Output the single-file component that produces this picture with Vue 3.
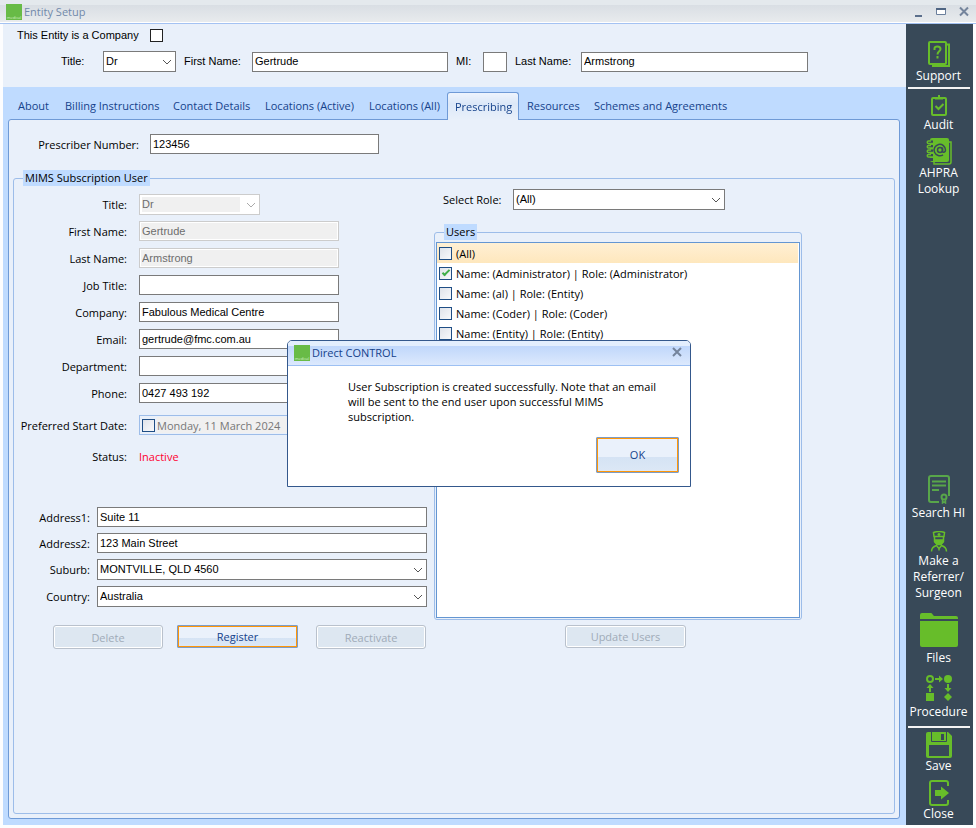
<script setup>
import { ref } from 'vue'

const tabs = ['About', 'Billing Instructions', 'Contact Details', 'Locations (Active)', 'Locations (All)', 'Prescribing', 'Resources', 'Schemes and Agreements']
const activeTab = ref('Prescribing')

const users = ref([
  { label: '(All)', checked: false },
  { label: 'Name: (Administrator) | Role: (Administrator)', checked: true },
  { label: 'Name: (al) | Role: (Entity)', checked: false },
  { label: 'Name: (Coder) | Role: (Coder)', checked: false },
  { label: 'Name: (Entity) | Role: (Entity)', checked: false }
])

const fields = ref([
  { id: 'sub-first', label: 'First Name:', value: 'Gertrude', disabled: true },
  { id: 'sub-last', label: 'Last Name:', value: 'Armstrong', disabled: true },
  { id: 'sub-job', label: 'Job Title:', value: '' },
  { id: 'sub-company', label: 'Company:', value: 'Fabulous Medical Centre' },
  { id: 'sub-email', label: 'Email:', value: 'gertrude@fmc.com.au' },
  { id: 'sub-dept', label: 'Department:', value: '' },
  { id: 'sub-phone', label: 'Phone:', value: '0427 493 192' }
])

const dialogOpen = ref(true)
</script>

<template>
  <div class="window">
    <header class="titlebar">
      <span class="logo"><span>medical</span></span>
      <h1>Entity Setup</h1>
      <div class="winbtns">
        <button type="button" aria-label="Minimise"><svg width="9" height="12" viewBox="0 0 9 12"><path d="M1 10h7" stroke="#5b6f8c" stroke-width="2" /></svg></button>
        <button type="button" aria-label="Maximise"><svg width="10" height="12" viewBox="0 0 10 12"><path d="M.5 2.500h9v6h-9z" fill="#fff" stroke="#6b7f9c" /><path d="M0 3h10" stroke="#4f6583" stroke-width="2" /></svg></button>
        <button type="button" aria-label="Close window"><svg width="10" height="12" viewBox="0 0 10 12"><path d="M1 1.500l8 8M9 1.500l-8 8" stroke="#74849c" stroke-width="2" /></svg></button>
      </div>
    </header>

    <div class="body">
      <main class="content">
        <section class="identity">
          <div class="company">
            <label for="is-company">This Entity is a Company</label>
            <input id="is-company" type="checkbox" class="check plain">
          </div>
          <div class="names">
            <label for="title">Title:</label>
            <span class="combo">
              <select id="title"><option>Dr</option></select>
              <svg width="10" height="6" viewBox="0 0 10 6"><path d="M1 1l4 4 4-4" /></svg>
            </span>
            <label for="first">First Name:</label>
            <input id="first" type="text" class="box" value="Gertrude">
            <label for="mi">MI:</label>
            <input id="mi" type="text" class="box">
            <label for="last">Last Name:</label>
            <input id="last" type="text" class="box" value="Armstrong">
          </div>
        </section>

        <nav class="tabs" role="tablist">
          <button v-for="t in tabs" :key="t" type="button" role="tab" :aria-selected="t === activeTab" :class="{ active: t === activeTab }" @click="activeTab = t">{{ t }}</button>
        </nav>

        <section class="panel">
          <div class="prescriber">
            <label for="prescriber">Prescriber Number:</label>
            <input id="prescriber" type="text" class="box" value="123456">
          </div>

          <fieldset class="group mims">
            <legend>MIMS Subscription User</legend>

            <div class="left">
              <div class="form">
                <div class="row">
                  <label for="sub-title">Title:</label>
                  <span class="combo short off">
                    <select id="sub-title" disabled><option>Dr</option></select>
                    <svg width="10" height="6" viewBox="0 0 10 6"><path d="M1 1l4 4 4-4" /></svg>
                  </span>
                </div>
                <div v-for="f in fields" :key="f.id" class="row">
                  <label :for="f.id">{{ f.label }}</label>
                  <input :id="f.id" v-model="f.value" type="text" class="box" :disabled="f.disabled">
                </div>
                <div class="row date-row">
                  <label for="start-on">Preferred Start Date:</label>
                  <span class="date">
                    <input id="start-on" type="checkbox" class="check">
                    <input type="text" aria-label="Start date" value="Monday, 11 March 2024" disabled>
                  </span>
                </div>
                <div class="row">
                  <span class="caption">Status:</span>
                  <span class="status">Inactive</span>
                </div>
              </div>

              <div class="address">
                <label for="addr1">Address1:</label>
                <input id="addr1" type="text" class="box" value="Suite 11">
                <label for="addr2">Address2:</label>
                <input id="addr2" type="text" class="box" value="123 Main Street">
                <label for="suburb">Suburb:</label>
                <span class="combo">
                  <select id="suburb"><option>MONTVILLE, QLD 4560</option></select>
                  <svg width="10" height="6" viewBox="0 0 10 6"><path d="M1 1l4 4 4-4" /></svg>
                </span>
                <label for="country">Country:</label>
                <span class="combo">
                  <select id="country"><option>Australia</option></select>
                  <svg width="10" height="6" viewBox="0 0 10 6"><path d="M1 1l4 4 4-4" /></svg>
                </span>
              </div>

              <div class="actions">
                <button type="button" class="btn" disabled>Delete</button>
                <button type="button" class="btn primary">Register</button>
                <button type="button" class="btn" disabled>Reactivate</button>
              </div>
            </div>

            <div class="right">
              <div class="role">
                <label for="role">Select Role:</label>
                <span class="combo">
                  <select id="role"><option>(All)</option></select>
                  <svg width="10" height="6" viewBox="0 0 10 6"><path d="M1 1l4 4 4-4" /></svg>
                </span>
              </div>
              <fieldset class="group users">
                <legend>Users</legend>
                <ul>
                  <li v-for="(u, i) in users" :key="u.label" :class="{ hot: i === 0 }">
                    <label><input v-model="u.checked" type="checkbox" class="check">{{ u.label }}</label>
                  </li>
                </ul>
              </fieldset>
              <button type="button" class="btn update" disabled>Update Users</button>
            </div>
          </fieldset>
        </section>
      </main>

      <aside class="sidebar">
        <button type="button" class="tool support">
          <svg width="24" height="27" viewBox="0 0 24 27" fill="none" stroke="#67bd2a" stroke-width="2">
            <path d="M19 3.500h3V25H6v-2" /><rect x="2" y="1" width="17" height="22" rx="1" />
            <path d="M7.500 9V7.500q0-2 3-2t3 2.500c0 2.500-3 2-3 5.500M10.500 15v2.500" />
          </svg>
          <span>Support</span>
        </button>
        <hr>
        <button type="button" class="tool audit">
          <svg width="18" height="21" viewBox="0 0 18 21" fill="none" stroke="#67bd2a" stroke-width="2">
            <rect x="2" y="3" width="14" height="17" rx="1" /><path d="M5 3.500h8M9 0v4" /><path d="M5.500 11l3 3 5-5" />
          </svg>
          <span>Audit</span>
        </button>
        <button type="button" class="tool lookup">
          <svg width="26" height="27" viewBox="0 0 26 27" fill="none">
            <path d="M23 4h2v20a2 2 0 0 1-2 2H8v-2" stroke="#67bd2a" stroke-width="1.500" />
            <rect x="4" y="0" width="19" height="24" rx="2" fill="#67bd2a" />
            <g stroke="#384958" stroke-width="3"><path d="M2 4h5M2 8.500h5M2 13h5M2 17.500h5M2 21.500h5" /></g>
            <g stroke="#67bd2a" stroke-width="1.500"><path d="M7 5.500H2.500a1 1 0 0 1 0-2.500H5M7 10H2.500a1 1 0 0 1 0-2.500H5M7 14.500H2.500a1 1 0 0 1 0-2.500H5M7 19H2.500a1 1 0 0 1 0-2.500H5" /></g>
            <circle cx="14" cy="12" r="2.500" stroke="#384958" stroke-width="1.500" />
            <path d="M16.500 9.500v3.500c0 2 3 1.500 3-1a5.700 5.700 0 1 0-2.500 4.800" stroke="#384958" stroke-width="1.500" />
          </svg>
          <span>AHPRA<br>Lookup</span>
        </button>

        <div class="spacer"></div>

        <button type="button" class="tool search">
          <svg width="24" height="29" viewBox="0 0 24 29" fill="none" stroke="#58a64a" stroke-width="2">
            <path d="M12 27H4a2 2 0 0 1-2-2V3a2 2 0 0 1 2-2h16a2 2 0 0 1 2 2v18" /><path d="M5 6.500h14M5 10.500h14M5 15h7" />
            <circle cx="17" cy="22" r="2.500" /><path d="M15.500 24v4l1.500-1 1.500 1v-4" stroke-width="1.500" />
          </svg>
          <span>Search HI</span>
        </button>
        <button type="button" class="tool referrer">
          <svg width="18" height="21" viewBox="0 0 18 21" fill="none" stroke="#67bd2a" stroke-width="1.500">
            <path d="M4 5.500L3.500 1.500c3-1 8-1 11 0L14 5.500z" /><path d="M9 2v3M7.500 3.500h3" /><path d="M4.500 5.500v5L7 13.500h4l2.500-3v-5" />
            <path d="M5 9h8v2l-2 2H7l-2-2z" fill="#67bd2a" /><path d="M1.500 20.500c0-4 2-5 5-6l2.500 3 2.500-3c3 1 5 2 5 6M9 17.500v2" />
          </svg>
          <span>Make a<br>Referrer/<br>Surgeon</span>
        </button>
        <button type="button" class="tool files">
          <svg width="38" height="34" viewBox="0 0 38 34" fill="#67bd2a">
            <path d="M0 6V2q0-2 2-2h9q1 0 2 2l1 1h22q2 0 2 2v1z" /><path d="M0 8h38v24q0 2-2 2H2q-2 0-2-2z" />
          </svg>
          <span>Files</span>
        </button>
        <button type="button" class="tool procedure">
          <svg width="28" height="28" viewBox="0 0 28 28" fill="#67bd2a">
            <circle cx="5" cy="5" r="3" fill="none" stroke="#67bd2a" stroke-width="2" /><circle cx="23" cy="5" r="4" />
            <path d="M10 4h4V1.500L18 5l-4 3.500V6h-4zM4 18v-4H1.500L5 10l3.500 4H6v4zM22 10h2v4h2.500L23 18l-3.500-4H22zM1 19h8v8H1zM23 19l4 4-4 4-4-4z" />
          </svg>
          <span>Procedure</span>
        </button>
        <hr class="low">
        <button type="button" class="tool">
          <svg width="26" height="26" viewBox="0 0 26 26">
            <path d="M2 0h20l4 4v20q0 2-2 2H2q-2 0-2-2V2q0-2 2-2z" fill="#67bd2a" />
            <path d="M5.500 0v9.500h15V0" fill="none" stroke="#384958" />
            <path d="M15 2h3v6h-3zM3 13h20v11H3z" fill="#384958" />
          </svg>
          <span>Save</span>
        </button>
        <button type="button" class="tool close">
          <svg width="22" height="26" viewBox="0 0 22 26" fill="none" stroke="#67bd2a" stroke-width="2">
            <path d="M20 6V3a2 2 0 0 0-2-2H4a2 2 0 0 0-2 2v20a2 2 0 0 0 2 2h14a2 2 0 0 0 2-2v-3" />
            <path d="M7 10h6V6.500L21 13l-8 6.500V16H7z" fill="#67bd2a" stroke="none" />
          </svg>
          <span>Close</span>
        </button>
      </aside>
    </div>

    <div v-if="dialogOpen" class="overlay">
      <div class="dialog" role="dialog" aria-labelledby="dialog-title">
        <header>
          <span class="logo"><span>medical</span></span>
          <h2 id="dialog-title">Direct CONTROL</h2>
          <button type="button" aria-label="Close dialog" @click="dialogOpen = false"><svg width="10" height="10" viewBox="0 0 10 10"><path d="M1 1l8 8M9 1l-8 8" stroke="#74849c" stroke-width="2" /></svg></button>
        </header>
        <p>User Subscription is created successfully. Note that an email will be sent to the end user upon successful MIMS subscription.</p>
        <div class="foot">
          <button type="button" class="btn primary ok" @click="dialogOpen = false">OK</button>
        </div>
      </div>
    </div>
  </div>
</template>

<style>
body { background: #fdfdfe; }
</style>

<style scoped>
*, *::before, *::after { box-sizing: border-box; }
.window {
  min-height: 100vh;
  display: flex;
  flex-direction: column;
  padding-bottom: 3px;
  font: 11px/15px "Open Sans", "Noto Sans", sans-serif;
  color: #000;
}
button, input, select { font: inherit; color: inherit; margin: 0; }
button { padding: 0; border: 0; background: none; }

.titlebar {
  display: flex;
  align-items: center;
  height: 24px;
  padding: 0 7px 0 6px;
  border-bottom: 1px solid #a4c2f2;
  background: linear-gradient(#e4e9ed 0 5px, #d9dee4 5px, #e8ebed 22px, #fff 22px);
}
.titlebar h1 { margin: 0 0 0 2px; flex: 1; font-size: 11px; font-weight: 400; color: #7189aa; }
.winbtns { display: flex; gap: 13px; }
.winbtns svg { display: block; }
.logo {
  width: 16px; height: 16px;
  display: flex; align-items: flex-end; justify-content: center;
  overflow: hidden;
  background: #68bb46;
  color: #d5efc8;
  font-size: 4px; line-height: 5px;
}

.body { flex: 1; display: flex; padding: 0 3px; }
.content { flex: 1; min-width: 0; display: flex; flex-direction: column; background: #bfdbff; }

.identity { height: 63px; padding: 3px 14px; background: #e9f0fa; font-family: "Liberation Sans", Arial, sans-serif; }
.company { display: flex; align-items: center; gap: 11px; height: 16px; }
.names {
  display: grid;
  grid-template-columns: 34px 73px 60px 196px 19px 24px 58px 227px;
  column-gap: 8px;
  align-items: center;
  padding: 8px 0 0 44px;
}
.box, .combo select {
  width: 100%;
  height: 20px;
  padding: 0 2px 1px;
  border: 1px solid #7a7a7a;
  border-radius: 0;
  background: #fff;
  font-family: "Liberation Sans", Arial, sans-serif;
}
.box:disabled { border-color: #ccc; background: #f0f0f0; box-shadow: inset 0 0 0 1px #fff; color: #6d6d6d; }
.combo { position: relative; display: block; }
.combo select { display: block; height: 21px; appearance: none; padding-right: 18px; }
.combo svg { position: absolute; right: 4px; top: 8px; pointer-events: none; fill: none; stroke: #555; }
.combo.off select { border-color: #ccc; background: linear-gradient(90deg, #f0f0f0 100px, #fff 100px); box-shadow: inset 0 0 0 2px #fff; color: #6d6d6d; opacity: 1; }
.combo.off svg { stroke: #aaa; }

.check {
  appearance: none;
  flex: none;
  display: grid;
  place-items: center;
  width: 13px; height: 13px;
  border: 1px solid #1f4e85;
  background: linear-gradient(135deg, #dfe3ea, #f8f9fb);
}
.check.plain { border-color: #222; background: #fff; }
.check:checked::after { content: ""; width: 4px; height: 8px; margin-top: -2px; border: solid #3fae49; border-width: 0 2px 2px 0; transform: rotate(45deg); }

.tabs {
  display: grid;
  grid-template-columns: 47px 108px 92px 104px 86px 72px 67px auto;
  justify-content: start;
  height: 32px;
  padding: 5px 7px 0;
  color: #15428b;
}
.tabs button { padding: 0 8px; white-space: nowrap; text-align: left; }
.tabs button.active {
  padding: 0 7px;
  border: 1px solid #6f9ad6;
  border-bottom: 0;
  border-radius: 3px 3px 0 0;
  background: linear-gradient(#eef4fd, #dce8f8 40%, #e9f0fa);
  z-index: 1;
  margin-bottom: -1px;
}

.panel {
  flex: 1;
  display: flex;
  flex-direction: column;
  margin: 0 6px 6px 5px;
  padding: 14px 4px 4px;
  border: 1px solid #6f9ad6;
  border-radius: 3px;
  background: #e9f0fa;
}
.prescriber { display: grid; grid-template-columns: 126px 229px; column-gap: 11px; align-items: center; }
.prescriber label, .row label, .row .caption, .address label { text-align: right; }
.group { margin: 0; min-width: 0; border: 1px solid #9dbde9; border-radius: 3px; }
.group legend { margin-left: 9px; padding: 0 2px; height: 16px; background: #bfdbff; }
.mims {
  flex: 1;
  display: flex;
  align-items: flex-start;
  gap: 7px;
  margin-top: 16px;
  padding: 0;
}
.left { width: 413px; padding-top: 8px; }
.form { display: grid; row-gap: 7px; }
.row { display: grid; grid-template-columns: 113px 200px; column-gap: 12px; align-items: center; min-height: 20px; }
.short { width: 121px; margin-bottom: -1px; }
.date-row { margin-top: 5px; }
.date { display: flex; align-items: center; gap: 2px; height: 20px; padding: 2px; border: 1px solid #9dbde9; background: #e9f0fa; }
.date input[type="text"] { flex: 1; min-width: 0; height: 16px; padding: 0; border: 0; background: #f0f0f0; color: #777; }
.status { color: #ff0030; }
.row:last-child { margin-top: 4px; }
.address { display: grid; grid-template-columns: 76px 330px; column-gap: 7px; row-gap: 6px; align-items: center; margin-top: 41px; }
.actions { display: flex; gap: 14px; align-items: flex-start; margin: 18px 0 0 39px; padding-right: 1px; }
.actions .btn:last-child { margin-left: auto; }

.btn {
  width: 110px; height: 24px;
  border: 1px solid #b9c1cc;
  border-radius: 3px;
  background: #dde7f1;
  box-shadow: inset 0 0 0 1px #fff;
  color: #a0abb8;
}
.btn.primary {
  width: 121px; height: 23px;
  border: 1px solid #7d9cc5;
  border-radius: 1px;
  box-shadow: inset 0 0 0 1px #ff9608;
  background: linear-gradient(#eaf1fb 55%, #d5e3f4 55%, #dce8f6);
  color: #15428b;
}
.right { width: 368px; padding-top: 3px; }
.role { display: grid; grid-template-columns: 62px 212px; column-gap: 8px; align-items: center; margin-left: 9px; }
.users { margin-top: 14px; padding: 0 1px 1px; }
.group.users legend { margin-left: 8px; }
.users ul { list-style: none; margin: 2px 0 0; padding: 0; min-height: 376px; border: 1px solid #6496d2; background: #fff; }
.users li { height: 20px; padding: 0 2px; }
.users li.hot { margin-right: 1px; background: linear-gradient(#fff0d4, #fee7bd); }
.users label { display: flex; align-items: center; gap: 4px; height: 20px; }
.btn.update { display: block; width: 121px; height: 23px; margin: 5px auto 0 131px; }

.sidebar { width: 67px; display: flex; flex-direction: column; padding: 17px 0 3px; background: #384958; color: #fff; font-size: 12px; line-height: 16px; }
.sidebar hr { width: 62px; height: 2px; margin: 3px auto 6px 2px; border: 0; background: #f3f3f3; }
.sidebar hr.low { margin-top: 6px; margin-bottom: 4px; }
.tool { display: flex; flex-direction: column; align-items: center; width: 100%; margin-left: -1px; }
.tool svg { display: block; }
.audit, .search { gap: 1px; }
.lookup { margin-top: 5px; }
.referrer { margin-top: 10px; gap: 1px; }
.files { margin-top: 12px; gap: 3px; }
.procedure { margin-top: 8px; gap: 2px; }
.close { margin-top: 6px; }
.spacer { flex: 1; }

.overlay { position: fixed; inset: 0; display: grid; place-items: center; padding: 0 0 2px 2px; }
.dialog { width: 404px; border: 1px solid #34588c; border-radius: 5px 5px 0 0; background: #fff; overflow: hidden; }
.dialog header {
  display: flex;
  align-items: center;
  height: 25px;
  padding: 0 8px 0 6px;
  border-bottom: 1px solid #9dc0f3;
  background: linear-gradient(#e3eefd 0 5px, #c0d7fb 5px, #dce9fd);
}
.dialog h2 { flex: 1; margin: 0 0 0 2px; font-size: 11px; font-weight: 400; color: #15428b; }
.dialog p { margin: 0; padding: 13px 34px 0 60px; }
.foot { display: flex; justify-content: flex-end; padding: 13px 11px 13px; }
.btn.ok { width: 83px; height: 36px; }
</style>
